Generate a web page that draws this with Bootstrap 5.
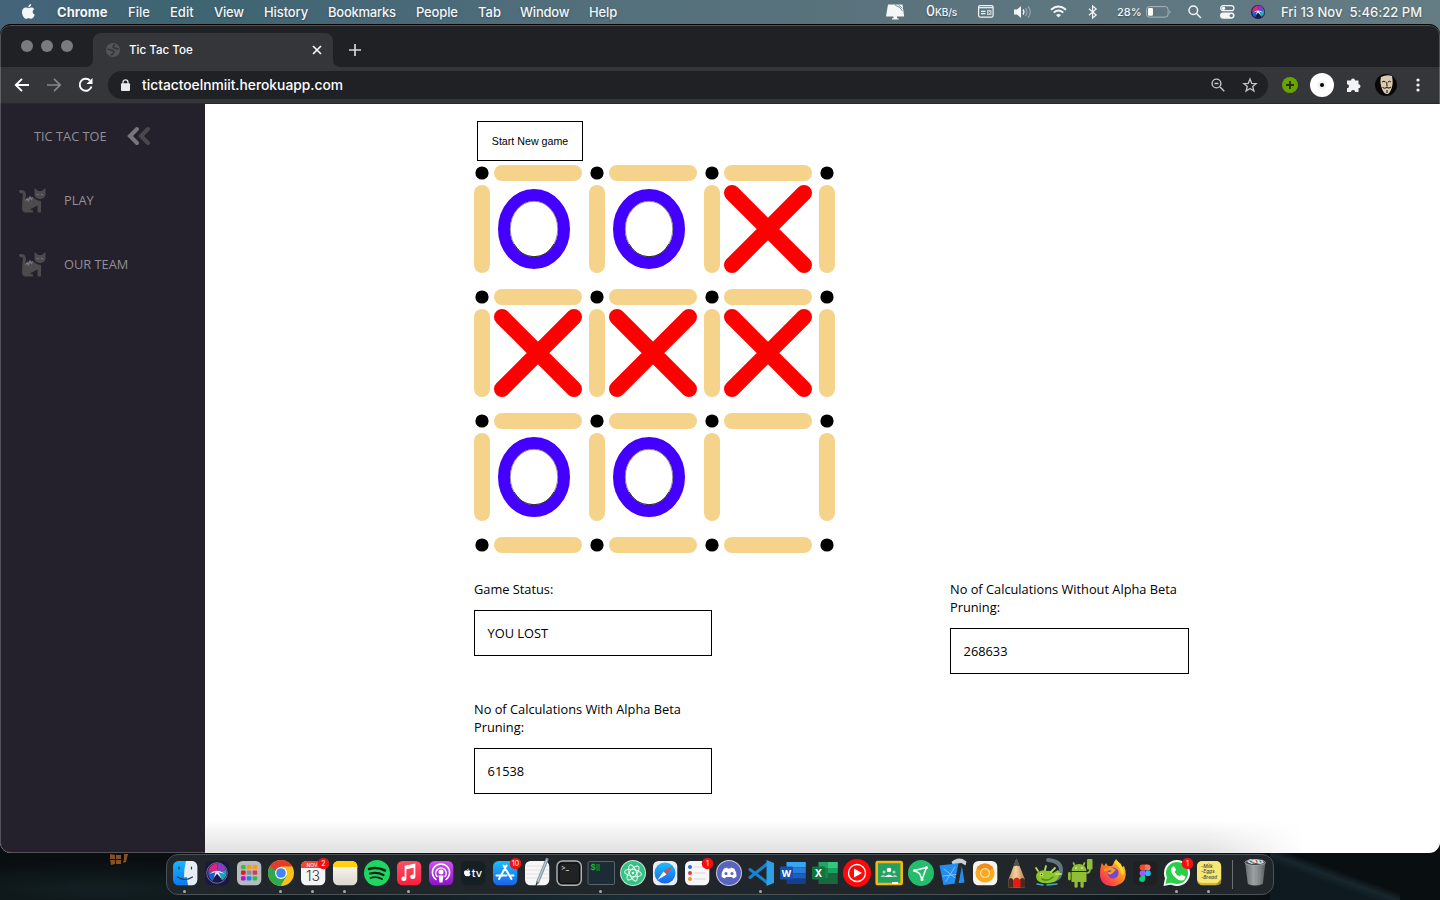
<!DOCTYPE html>
<html lang="en">
<head>
<meta charset="utf-8">
<meta name="viewport" content="width=device-width, initial-scale=1">
<title>Tic Tac Toe</title>
<link href="https://cdn.jsdelivr.net/npm/bootstrap@5.3.0/dist/css/bootstrap.min.css" rel="stylesheet">
<style>
  body { width:1440px; height:900px; overflow:hidden; font-family:Inter,"Liberation Sans",sans-serif; font-size:13px; line-height:18px;
    background:radial-gradient(ellipse 260px 30px at 100px 890px,#132023,transparent),linear-gradient(20deg,#0e1a20 40%,#18262d 49%,transparent 58%) 1270px 853px/130px 47px no-repeat,radial-gradient(ellipse 600px 40px at 700px 900px,#1c3039,transparent),#090e11; }
  svg { display:block; overflow:visible; }
  .desk-bar { height:24px; color:#f4f6f7; font-weight:500; text-shadow:0 1px 2px rgba(0,0,0,.35); padding:0 18px 0 22px; background:linear-gradient(90deg,#45647a 0,#3e6571 200px,#486878 380px,#55717c 640px,#5a737d 900px,#647c84 1440px); }
  .desk-menus { display:grid; grid-template-columns:35px 71px 42px 44px 50px 64px 88px 62px 42px 69px 30px; align-items:center; white-space:nowrap; }
  .desk-tray { display:grid; grid-template-columns:40px 52px 35px 37px 38px 29px 29px 42px 32px 31px 30px 141px; align-items:center; white-space:nowrap; padding-bottom:1px; }
  .win-back { background:linear-gradient(90deg,#45647a,#3e6571 200px,#55717c 640px,#647c84) top/100% 40px no-repeat; }
  .win { height:829px; border-radius:11px; border-top:1px solid #000; overflow:hidden; background:#202124; position:relative; }
  .win-edge { inset:0; border:1px solid rgba(255,255,255,.22); border-radius:10px; pointer-events:none; }
  .tab-strip { height:42px; padding:8px 0 0 21px; color:#fff; }
  .win-dot { width:12px; height:12px; border-radius:50%; background:#7b7b7d; }
  .tab-live { width:240px; height:34px; margin-left:20px; padding:0 11px 1px 13px; background:#35363a; border-radius:8px 8px 0 0; position:relative; font-size:11.600px; font-weight:500; }
  .tool-row { height:37px; background:#35363a; padding:0 14px; border-bottom:1px solid #28282c; color:#fff; }
  .omni { width:1160px; height:28px; border-radius:14px; background:#202124; margin-left:14px; padding:0 11px 0 13px; font-size:13.800px; font-weight:500; }
  .page { height:749px; background:#fff; color:#000; font-family:"Open Sans","Noto Sans",sans-serif; font-size:12.800px; position:relative; }
  .side { width:205px; background:#24212d; color:#919094; padding-top:23px; }
  .side a { color:inherit; text-decoration:none; height:18px; }
  .play-area { padding:17px 0 0 269px; }
  .new-game { width:106px; height:40px; margin:0 0 4px 3px; border:1px solid #000; border-radius:0; padding:0; font:10.667px "Liberation Sans",Arial,sans-serif; color:#000; }
  .board { display:grid; width:361px; grid-template-columns:20px 95px 20px 95px 20px 95px 16px; grid-template-rows:20px 104px 20px 104px 20px 104px 16px; }
  .stick-h { width:88px; height:16px; border-radius:8px; background:#f5d38b; }
  .stick-v { width:16px; height:88px; border-radius:8px; background:#f5d38b; }
  .stats { margin:27px 0 0 0; display:grid; grid-template-columns:238px 239px; column-gap:238px; row-gap:26px; }
  .stat-box { height:46px; border:1px solid #000; margin-top:12px; padding:0 12.600px; }
  .dock-shade { left:205px; right:0; bottom:0; height:32px; background:linear-gradient(rgba(0,0,0,0),rgba(0,0,0,.04) 30%,rgba(0,0,0,.12)); -webkit-mask-image:linear-gradient(90deg,#000 1000px,transparent 1100px); mask-image:linear-gradient(90deg,#000 1000px,transparent 1100px); pointer-events:none; }
  .desk-foot { height:47px; padding:1px 0 0 166px; position:relative; }
  .dock { width:1108px; height:41px; border:1px solid #4b5256; border-radius:12px; padding:0 1px 0 2px; background:#20262a; }
  .dock svg { flex:none; }
  .dock-rule { width:1px; height:29px; background:#687074; margin:5px 6px 0 7px; }
  .lamp { left:109px; top:0; }
</style>
</head>
<body>
<header class="desk-bar d-flex justify-content-between">
  <nav class="desk-menus">
    <svg width="13" height="16" viewBox="0 0 13 16" fill="#f4f6f7"><path d="M9.200 0c.1 1.600-1.200 3.200-2.800 3.200C6.200 1.700 7.600.2 9.200 0zM6.700 4.200c.7 0 1.500-.7 2.700-.7 1.200 0 2.300.6 2.900 1.600-2.400 1.500-2 4.700.5 5.700-.6 1.700-2 4-3.500 4-1 0-1.400-.6-2.600-.6s-1.600.6-2.600.6C2.400 14.800 0 11.300 0 8.200 0 5.200 1.900 3.600 3.900 3.600c1.200 0 2.100.6 2.800.6z"/></svg>
    <b style="letter-spacing:.05px">Chrome</b><span>File</span><span>Edit</span><span style="letter-spacing:-.2px">View</span><span style="letter-spacing:-.1px">History</span><span style="letter-spacing:-.25px">Bookmarks</span><span style="letter-spacing:-.15px">People</span><span>Tab</span><span style="letter-spacing:-.2px">Window</span><span style="letter-spacing:-.1px">Help</span>
  </nav>
  <div class="desk-tray">
    <svg width="19" height="16" viewBox="0 0 19 16" fill="#f4f6f7"><path d="M2 .5h14.500l1.700 12H0zM7.500 12.500h3.500v1.700h1.500v1.300H6v-1.300h1.500z"/><path d="M9 1q5 1.500 7.500 6M12.500 1l4 3.500" stroke="#5a737d" stroke-width=".8" fill="none"/></svg>
    <span style="letter-spacing:-.1px"><span style="font-size:14px">0</span><span style="font-size:10px">KB/s</span></span>
    <svg width="16" height="13" viewBox="0 0 16 13" fill="none" stroke="#f4f6f7"><rect x=".6" y=".6" width="14.500" height="11.500" rx="1.500" stroke-width="1.200"/><path d="M1 2.700h14" stroke-width="1.200"/><path d="M3 6.300h4.500M3 8.700h4.500" stroke-width="1.200"/><path d="M9 5h4.500v5H9z" fill="#c9d2d5" stroke="none"/><path d="M10 6.300l2.500 2.400M12.500 6.300L10 8.700" stroke="#5a737d" stroke-width=".8"/></svg>
    <svg width="19" height="14" viewBox="0 0 19 14" fill="none"><path d="M1 4.500h3L8 1v12L4 9.500H1z" fill="#f4f6f7"/><path d="M10 4.500q2 2.500 0 5" stroke="#f4f6f7" stroke-width="1.300"/><path d="M12.500 3q3 4 0 8M15 1.500q4.500 5.500 0 11" stroke="#9aabb1" stroke-width="1.200"/></svg>
    <svg width="17" height="13" viewBox="0 0 17 13" fill="none" stroke="#f4f6f7" stroke-width="1.900"><path d="M1 4.700Q8.500-1.700 16 4.700M3.700 7.600q4.800-4.200 9.600 0"/><path d="M6 10q2.500-2 5 0L8.500 12.600z" fill="#f4f6f7" stroke="none"/></svg>
    <svg width="10" height="14" viewBox="0 0 10 14" fill="none" stroke="#f4f6f7" stroke-width="1.200"><path d="M1 3.800l7.200 6.200-3.600 3V1l3.600 3L1 10.200"/></svg>
    <span style="font-size:11px">28%</span>
    <svg width="26" height="12" viewBox="0 0 26 12"><rect x=".6" y=".6" width="21.500" height="10.500" rx="2.800" fill="none" stroke="#aab8bc"/><rect x="2" y="2" width="5" height="7.700" rx="1.300" fill="#fff"/><path d="M23.500 4q2 1.900 0 4z" fill="#aab8bc"/></svg>
    <svg width="13" height="13" viewBox="0 0 13 13" fill="none" stroke="#f4f6f7" stroke-width="1.500"><circle cx="5.300" cy="5.300" r="4.300"/><path d="M8.500 8.500l4 4" stroke-linecap="round"/></svg>
    <svg width="15" height="14" viewBox="0 0 15 14"><rect x=".7" y=".7" width="13.200" height="5" rx="2.500" fill="none" stroke="#f4f6f7" stroke-width="1.200"/><circle cx="3.500" cy="3.200" r="1.700" fill="#fff"/><rect x="0" y="7.500" width="14.500" height="6.200" rx="3.100" fill="#f4f6f7"/><circle cx="11.300" cy="10.600" r="1.700" fill="#60777f"/></svg>
    <svg width="14" height="14" viewBox="0 0 28 28"><use href="#orb"/></svg>
    <span id="clock" style="letter-spacing:.03px">Fri 13 Nov&nbsp; 5:46:22 PM</span>
  </div>
</header>

<div class="win-back">
<div class="win">
  <div class="tab-strip d-flex">
    <div class="d-flex" style="gap:8px;padding-top:7px"><i class="win-dot"></i><i class="win-dot"></i><i class="win-dot"></i></div>
    <div class="tab-live d-flex align-items-center">
      <svg width="14" height="14" viewBox="0 0 14 14"><circle cx="7" cy="7" r="7" fill="#54555a"/><path d="M1.500 6.500c2-.8 3 .9 4.500.9S8.500 9 7.500 10 6.500 12 4.500 11.500M9 1.500C7 2 6.500 4.300 8 4.600s2 1.400 4.500 1.400" fill="none" stroke="#35363a" stroke-width="1.700"/></svg>
      <span class="flex-grow-1" style="margin-left:9px">Tic Tac Toe</span>
      <svg width="10" height="10" viewBox="0 0 10 10" stroke="#fff" stroke-width="1.600"><path d="M1 1l8 8M9 1L1 9"/></svg>
      <svg class="position-absolute" style="left:-8px;bottom:0" width="256" height="8" fill="#35363a"><path d="M8 0v8H0q8 0 8-8zM248 0v8h8q-8 0-8-8z"/></svg>
    </div>
    <svg width="12" height="12" viewBox="0 0 12 12" stroke="#d5d6d8" stroke-width="1.700" style="margin:11px 0 0 16px"><path d="M6 0v12M0 6h12"/></svg>
  </div>
  <div class="tool-row d-flex align-items-center">
    <svg width="16" height="14" viewBox="0 0 16 14" fill="none" stroke="#fff" stroke-width="1.900"><path d="M15 7H2M8 .8L1.800 7 8 13.200"/></svg>
    <svg width="16" height="14" viewBox="0 0 16 14" fill="none" stroke="#86878a" stroke-width="1.700" style="margin-left:16px"><path d="M1 7h13M8 .8L14.200 7 8 13.200"/></svg>
    <svg width="16" height="16" viewBox="0 0 16 16" fill="none" stroke="#fff" stroke-width="1.900" style="margin-left:16px"><path d="M13.500 9.500A6 6 0 1 1 12 3.500"/><path d="M14.500 1v6h-6z" fill="#fff" stroke="none"/></svg>
    <div class="omni d-flex align-items-center">
      <svg width="9" height="12" viewBox="0 0 9 12"><path d="M2 5V3.300a2.500 2.500 0 0 1 5 0V5" fill="none" stroke="#e8eaed" stroke-width="1.300"/><rect y="4.300" width="9" height="7.700" rx="1" fill="#e8eaed"/></svg>
      <span class="flex-grow-1" style="margin-left:12px"><span id="addr">tictactoelnmiit.herokuapp.com</span></span>
      <svg width="14" height="14" viewBox="0 0 14 14" fill="none" stroke="#c3c5c8" stroke-width="1.400"><circle cx="5.500" cy="5.500" r="4.400"/><path d="M9 9l4.300 4.300M3.500 5.500h4"/></svg>
      <svg width="14" height="14" viewBox="0 0 14 14" fill="none" stroke="#c3c5c8" stroke-width="1.300" style="margin-left:18px"><path d="M7 1l1.700 4.300 4.500.3-3.500 2.900 1.200 4.500L7 10.500 3.100 13l1.200-4.500L.8 5.600l4.500-.3z"/></svg>
    </div>
    <svg width="16" height="16" viewBox="0 0 16 16" style="margin-left:14px"><circle cx="8" cy="8" r="8" fill="#68a300"/><path d="M8 4v8M4 8h8" stroke="#223010" stroke-width="1.900"/></svg>
    <svg width="24" height="24" viewBox="0 0 24 24" style="margin-left:12px"><circle cx="12" cy="12" r="12" fill="#fff"/><circle cx="12" cy="12" r="4.500" fill="#f1f1f1"/><circle cx="12" cy="12" r="2" fill="#000"/></svg>
    <svg width="16" height="16" viewBox="0 0 16 16" fill="#f1f3f4" style="margin-left:12px"><path d="M1 3.500h4a2 2 0 1 1 4 0h3.500v3.700a2 2 0 1 1 0 4V15H9.200a2.100 2.100 0 0 0-4.200 0H1v-3.700a2 2 0 0 0 0-4z"/></svg>
    <svg width="22" height="22" viewBox="0 0 22 22" style="margin-left:13px"><circle cx="11" cy="11" r="11" fill="#090706"/><path d="M6 3q6-3 11-1 1.500 7-.5 12.500-2 5.500-4.500 5.500-3 0-5-5Q4.500 8 6 3z" fill="#dccbb0"/><path d="M7 8q2-1.500 3.500 0M13 8q1.500-1.500 3 0M11.800 8l.2 4.500M7.500 13.500q2 1.500 4.500 0 2 1.500 4-.5M12 16v3" stroke="#17100a" stroke-width="1" fill="none"/></svg>
    <svg width="4" height="14" viewBox="0 0 4 14" fill="#f1f3f4" style="margin-left:19px"><circle cx="2" cy="2" r="1.600"/><circle cx="2" cy="7" r="1.600"/><circle cx="2" cy="12" r="1.600"/></svg>
  </div>
  <div class="page d-flex">
    <aside class="side">
      <div class="d-flex align-items-center" style="padding-left:34px;height:18px"><span style="width:93px">TIC TAC TOE</span>
        <svg width="24" height="18" viewBox="0 0 24 18" fill="none" stroke-width="4" stroke-linecap="round"><path d="M21 2l-7 7 7 7" stroke="#49494b"/><path d="M10 2L3 9l7 7" stroke="#77777a"/></svg></div>
      <a href="#" class="d-flex align-items-center" style="margin:46px 0 46px 18px"><svg width="28" height="26" viewBox="0 -1 28 26" style="margin-right:18px"><use href="#cat"/></svg>PLAY</a>
      <a href="#" class="d-flex align-items-center" style="margin-left:18px"><svg width="28" height="26" viewBox="0 -1 28 26" style="margin-right:18px"><use href="#cat"/></svg>OUR TEAM</a>
    </aside>
    <main class="play-area">
      <button class="new-game btn d-block">Start New game</button>
      <div class="board" id="board"></div>
      <div class="stats">
        <div><div>Game Status:</div><div class="stat-box d-flex align-items-center">YOU LOST</div></div>
        <div><div>No of Calculations Without Alpha Beta Pruning:</div><div class="stat-box d-flex align-items-center">268633</div></div>
        <div><div>No of Calculations With Alpha Beta Pruning:</div><div class="stat-box d-flex align-items-center">61538</div></div>
      </div>
    </main>
    <div class="dock-shade position-absolute"></div>
  </div>
  <div class="win-edge position-absolute"></div>
</div>
</div>

<footer class="desk-foot">
  <svg class="lamp position-absolute" width="19" height="13" viewBox="0 0 19 13" fill="#a5622c"><path d="M1 1l5 1v4H1zM7 2h5v4H7zM1 7h5v4l-4 1zM7 7h5v4H7zM15 1h4l-2 8-3 1 1-4z" opacity=".8"/></svg>
  <div class="dock d-flex" id="dock"></div>
</footer>

<svg width="0" height="0" class="position-absolute">
  <defs>
    <linearGradient id="gBlue" x2="0" y2="1"><stop stop-color="#1bc0fb"/><stop offset="1" stop-color="#1a62e8"/></linearGradient>
    <linearGradient id="gFace" x2="0" y2="1"><stop stop-color="#18b6fd"/><stop offset="1" stop-color="#0b78f0"/></linearGradient>
    <linearGradient id="gRed" x2="0" y2="1"><stop stop-color="#fb5163"/><stop offset="1" stop-color="#fa1f3c"/></linearGradient>
    <linearGradient id="gPod" x2="0" y2="1"><stop stop-color="#d350f3"/><stop offset="1" stop-color="#8913c9"/></linearGradient>
    <linearGradient id="gFox" x1="1" x2="0" y2="1"><stop stop-color="#ffe226"/><stop offset=".5" stop-color="#ff7a24"/><stop offset="1" stop-color="#f5106c"/></linearGradient>
    <linearGradient id="gNote" x2="0" y2="1"><stop stop-color="#fffbee"/><stop offset="1" stop-color="#dcd8d2"/></linearGradient>
    <linearGradient id="gWood"><stop stop-color="#c9955c"/><stop offset=".45" stop-color="#f3d3a2"/><stop offset="1" stop-color="#b67c46"/></linearGradient>
    <linearGradient id="gBin"><stop stop-color="#666b6e"/><stop offset=".45" stop-color="#a0a5a7"/><stop offset="1" stop-color="#595e61"/></linearGradient>
    <g id="orb"><circle cx="14" cy="14" r="14" fill="#211747"/><path d="M14 14L2 12A13 13 0 0 1 15 1z" fill="#d9277f"/><path d="M14 14L15 1a13 13 0 0 1 11 9z" fill="#8a3cc9"/><path d="M14 14l12-4a13 13 0 0 1-5 14z" fill="#15a5b8"/><path d="M14 14L2 12q0 8 6 13z" fill="#205fc4"/><path d="M4 15q10-8 20 0l-8-2 4 8-6-6-4 5 2-7z" fill="#fff" opacity=".9"/></g>
    <g id="cat"><path d="M2.500 3.500C6.500 2.700 7 7 6 10" fill="none" stroke="#4b4b4d" stroke-width="3" stroke-linecap="round"/><path d="M4.500 10q1.500-2 3 2 3-4 7-3l3 2q2 2 5.500 2v11.500h-3.500v-7l-7.500 4 3 1v2H7q-3-.5-3-4zM16.500 0l4 3h3l4-3v6q0 4.500-5.500 5-5.500-.5-5.500-5z" fill="#4b4b4d"/><path d="M7.500 12.500l1.800-2 1 2.500 1.700-4 1.300 2.500 1.500-2M18.800 6.500h1.800M23 6.500h1.800" stroke="#77777c" stroke-width="1.200" fill="none"/></g>
  </defs>
</svg>

<script>
// Build the 3x3 board: pegs and sticks around each cell, marks inside.
const marks = ['OOX', 'XXX', 'OO '];
const peg = '<svg width="16" height="16"><circle cx="8" cy="8" r="6.600"/></svg>';
const cross = '<svg width="88" height="88" viewBox="0 0 88 88"><path d="M8 8l72 72M80 8L8 80" stroke="red" stroke-width="16" stroke-linecap="round"/></svg>';
const nought = '<svg width="88" height="88" viewBox="0 0 88 88" fill="none"><ellipse cx="40" cy="44" rx="30" ry="34" stroke="#40f" stroke-width="12"/><ellipse cx="40" cy="44" rx="23.700" ry="27.700" stroke="#777" stroke-width=".8"/><path d="M20 59Q27 71.500 40 71.700T60 59" stroke="#222" stroke-width=".9"/></svg>';
let cells = '';
for (let r = 0; r < 7; r++) for (let c = 0; c < 7; c++) {
  if (r % 2 === 0) cells += '<div>' + (c % 2 ? '<div class="stick-h"></div>' : peg) + '</div>';
  else if (c % 2 === 0) cells += '<div><div class="stick-v"></div></div>';
  else { const m = marks[(r - 1) / 2][(c - 1) / 2]; cells += '<div>' + (m === 'X' ? cross : m === 'O' ? nought : '') + '</div>'; }
}
document.getElementById('board').innerHTML = cells;

// Dock icons, each drawn in a 32x38 slot.
const tile = (fill, more = '') => `<rect x="4" y="6" width="24.300" height="24.300" rx="5.500" fill="${fill}" ${more}/>`;
const disc = (fill, r = 13) => `<circle cx="16" cy="18" r="${r}" fill="${fill}"/>`;
const word = (x, y, s, t, f, more = '') => `<text x="${x}" y="${y}" font-size="${s}" fill="${f}" text-anchor="middle" ${more}>${t}</text>`;
const badge = n => `<circle cx="26.500" cy="8.500" r="5.800" fill="#f70d10"/>` + word(26.500, 11, 7, n, '#fff');
const line = (d, c, w = 1) => `<path d="${d}" stroke="${c}" stroke-width="${w}" fill="none" stroke-linecap="round"/>`;
const fill = (d, c) => `<path d="${d}" fill="${c}"/>`;
const on = '<circle cx="15.500" cy="36.500" r="1.500" fill="#a6abae"/>';
const launch = ['#35c13b','#fb9a17','#fd9b16','#ee1132','#8b8d90','#ee2f53','#a916df','#1d83f0','#22c44c'].map((c, i) => `<rect x="${8 + i % 3 * 5.800}" y="${10 + (i / 3 | 0) * 5.600}" width="4.600" height="4.200" rx="1" fill="${c}"/>`).join('');
const slots = [
  tile('url(#gFace)') + fill('M17 6h6a5.500 5.500 0 0 1 5.300 5.500v13.300a5.500 5.500 0 0 1-5.500 5.500H19q-1-4-1-8h-3q0-9 2-16.300z', '#e8edf3') + line('M10 12v2M22.500 12v2M8.500 22q7.500 5 15 0', '#163b58', 1.200) + on,
  tile('#1c173f') + '<g transform="translate(5.500 7.500) scale(.75)"><use href="#orb"/></g><circle cx="16" cy="18" r="10.300" fill="none" stroke="#7c83a2" stroke-width=".8"/>',
  tile('#b9bcbe') + launch,
  disc('#fbc116') + fill('M4.700 11.500A13 13 0 0 0 15.500 31L21.500 21 16 18z', '#2da94f') + fill('M4.700 11.500A13 13 0 0 1 27.300 11.500H16L11 16z', '#e33b2e') + disc('#fff', 6) + disc('#4285f4', 4.800) + on,
  tile('#f5f5f5') + fill('M4 13V11.500A5.500 5.500 0 0 1 9.500 6h13.300a5.500 5.500 0 0 1 5.500 5.500V13z', '#ef4438') + word(15, 12, 5, 'NOV', '#fff') + word(16, 26, 14, '13', '#333', 'font-weight="300"') + badge(2) + on,
  tile('url(#gNote)') + fill('M4 12v-.5A5.500 5.500 0 0 1 9.500 6h13.300a5.500 5.500 0 0 1 5.500 5.500v.5z', '#ffd00b') + on,
  disc('#1ed760') + line('M8 14q8-2.500 16 1.500', '#152019', 2.600) + line('M9 18.500q7-2 13.500 1.500', '#152019', 2.200) + line('M9.500 23q6-2 11.500 1', '#152019', 1.800),
  tile('url(#gRed)') + '<path d="M12.500 23.500v-12l9-2v12" fill="none" stroke="#fff" stroke-width="1.700"/><path d="M12.500 12l9-2v2.500l-9 2z" fill="#fff"/><ellipse cx="10.800" cy="23.700" rx="2.600" ry="2.200" fill="#fff"/><ellipse cx="19.800" cy="21.700" rx="2.600" ry="2.200" fill="#fff"/>' + on,
  tile('url(#gPod)') + line('M11 24.500a8.600 8.600 0 1 1 10 0M12 21.500a5.200 5.200 0 1 1 8 0', '#fff', 1.500) + '<circle cx="16" cy="17" r="2.500" fill="#fff"/>' + fill('M13.500 20.500h5l-1 7h-3z', '#fff'),
  tile('#142023') + '<g transform="translate(7 13.500) scale(.52)" fill="#fff"><path d="M9.200 0c.1 1.600-1.200 3.200-2.800 3.200C6.200 1.700 7.600.2 9.200 0zM6.700 4.200c.7 0 1.500-.7 2.700-.7 1.200 0 2.300.6 2.900 1.600-2.400 1.500-2 4.700.5 5.700-.6 1.700-2 4-3.500 4-1 0-1.400-.6-2.600-.6s-1.600.6-2.600.6C2.400 14.800 0 11.300 0 8.200 0 5.200 1.900 3.600 3.900 3.600c1.200 0 2.100.6 2.800.6z"/></g>' + word(20, 21.500, 11, 'tv', '#fff', 'font-weight="500"'),
  tile('url(#gBlue)') + line('M17.500 10.500L10 24M14.500 10.500L22.500 24M7.500 20.500h10M22 20.500h2.500', '#fff', 2) + badge(10),
  tile('#f6f6f6') + line('M4.500 11h23M4.500 15h23M4.500 19h23M4.500 23h23', '#dededf', .8) + line('M26 4.500L16.500 27.500', '#78909e', 3.200) + line('M25.700 5L17 26', '#bccbd4', 1.300) + line('M16 28l-1 2.500', '#333', 1.200),
  tile('#23272a', 'stroke="#aeb3b6" stroke-width="1.400"') + '<rect x="6" y="8" width="20.500" height="20.500" rx="3.500" fill="#202223" stroke="#0c0d0e"/>' + word(12, 14.500, 7, '&gt;_', '#fff'),
  '<rect x="3" y="6.500" width="26.500" height="23" rx="1.500" fill="#1c2b35" stroke="#56646c"/>' + word(8, 14.500, 8, '$', '#1bbf2e', 'font-weight="600"') + fill('M11 9h4v7h-4z', '#146b29') + on,
  disc('#cbe8db') + disc('#35c385', 12) + '<g fill="none" stroke="#e2f5e9" stroke-width="1.100"><ellipse cx="16" cy="18" rx="3.500" ry="8.500" transform="rotate(-20 16 18)"/><ellipse cx="16" cy="18" rx="3.500" ry="8.500" transform="rotate(40 16 18)"/><ellipse cx="16" cy="18" rx="3.500" ry="8.500" transform="rotate(100 16 18)"/></g><circle cx="16" cy="18" r="1.300" fill="#fff"/>',
  tile('#ececee') + disc('url(#gBlue)', 10.500) + fill('M23.500 11l-6 8.500-3-3z', '#f0413c') + fill('M8.500 25l6-8.500 3 3z', '#fff'),
  tile('#f7f7f8') + '<circle cx="9" cy="12" r="2" fill="#1674e5"/><circle cx="9" cy="18" r="2" fill="#ed3a30"/><circle cx="9" cy="24" r="2" fill="#f49a20"/>' + line('M13.500 12h11M13.500 18h11M13.500 24h11', '#cfcfd2', .8) + badge(1),
  disc('#c9cbe4') + disc('#5865bd', 12) + fill('M10.500 14q2-1.300 3.500-1.500l.6 1h2.800l.6-1q1.500.2 3.500 1.500 2.200 3.500 2 7.500-1.500 1.500-3.500 2l-1-1.500h-6l-1 1.500q-2-.5-3.500-2-.2-4 2-7.500z', '#fff') + '<circle cx="13" cy="18.600" r="1.500" fill="#5865bd"/><circle cx="19" cy="18.600" r="1.500" fill="#5865bd"/>',
  line('M5 14.500L22 27.500M5 22.500L22 9', '#1684cf', 3) + fill('M21.500 5l7.500 3v20L21.500 31z', '#2c9fe7') + on,
  fill('M9.500 7h19.300v5.500H9.500z', '#36a7f2') + fill('M9.500 12.500h19.300v5.700H9.500z', '#2b7cd7') + fill('M9.500 18.200h19.300v5.500H9.500z', '#1f5dbe') + fill('M9.500 23.700h19.300V29H9.500z', '#123f8f') + '<rect x="3" y="11.500" width="13" height="13" rx="1" fill="#194fae"/>' + word(9.500, 21.500, 9.500, 'W', '#fff', 'font-weight="700"'),
  fill('M9.500 7h10v6h-10z', '#24a366') + fill('M19 7h9.800v6H19z', '#36c481') + fill('M9.500 13h10v10h-10z', '#17834b') + fill('M19 13h9.800v5H19z', '#17a45e') + fill('M19 18h9.800v11H9.500v-6H19z', '#19683e') + '<rect x="3" y="11.500" width="13" height="13" rx="1" fill="#107440"/>' + word(9.500, 21.500, 10, 'X', '#fff', 'font-weight="700"'),
  disc('#fe0809', 14) + '<circle cx="16" cy="18" r="8.500" fill="none" stroke="#fff" stroke-width="1.300"/>' + fill('M13 13.500l8 4.500-8 4.500z', '#fff'),
  '<rect x="3.700" y="7" width="25" height="22" rx="1" fill="#24a062" stroke="#f4b910" stroke-width="2.600"/><circle cx="16" cy="15" r="2.300" fill="#fff"/><circle cx="11" cy="17" r="1.500" fill="#a9ddc0"/><circle cx="21" cy="17" r="1.500" fill="#a9ddc0"/>' + fill('M11.500 22q4.500-5 9 0z', '#fff') + fill('M7.500 22q3-4 5 0zM19.500 22q2-4 5 0z', '#a9ddc0') + fill('M19 27h6v2h-6z', '#fff'),
  disc('#24bd6b') + '<path d="M9.500 15.500L21.500 12.500 17 24.500 14.500 18.500z" fill="none" stroke="#fff" stroke-width="1.500" stroke-linejoin="round"/><circle cx="9.500" cy="15.500" r="1.500" fill="#fff"/><circle cx="21.500" cy="12.500" r="1.500" fill="#fff"/><circle cx="17" cy="24.500" r="1.500" fill="#fff"/>',
  fill('M2.500 10.500l22-2.500 3 19.500-21 2.500z', '#238df0') + line('M7 14l15 12M9 26L18 12M6 21l17-2', '#85c6fa', .9) + line('M23.500 8l-4 21', '#252c31', 4) + fill('M14.500 7q5-5 11-3l4 2.500-1 4-4-2.500-9 1z', '#c9d0d4'),
  tile('#f5f4f1') + disc('#f9ab1c', 9.600) + fill('M16 18L7.700 13.200A9.600 9.600 0 0 1 24.300 13.200z', '#f58b17') + disc('#ffe6a5', 5) + disc('#f7a72a', 3.800),
  fill('M15.500 3.500l8.500 21v8H7.500v-8z', 'url(#gWood)') + fill('M15.500 3l3.300 8.500q-3.500-1.500-6.500 0z', '#56504c') + fill('M7.500 24.500q2.500-3 4.500 0l1 8H7.500zM19 24.500q2-3 5 0v8h-5z', '#4a2b23') + fill('M12 32.500v-7q3.500-6 7.500 0v7z', '#e31c16'),
  line('M15 5q13 1 13 10 0 8-7 10', '#62767d', 4) + fill('M5 17q5-3 9-1 3-1 6 2l5-3q3 2 1 6-2 6-9 7-8 1-12-2-4-5 0-9z', '#8cc62c') + line('M5 16l-2-3M12 15l1-4M18 17l4-4M23 19l5 0', '#b6df4d', 1.800) + line('M9 24q6 3 11-2', '#4f8f1c', 1.500) + line('M4 29l6 1M14 30l10-1', '#4aaac5', 1.500) + '<circle cx="8.500" cy="19.500" r="1.700" fill="#ece25a"/><circle cx="8.500" cy="19.500" r=".8" fill="#222"/>',
  '<g fill="#91bd37"><path d="M6.500 16a7.500 7 0 0 1 15 0zM6.500 17h15v10h-15z"/><rect x="3" y="17" width="2.800" height="8.500" rx="1.400"/><rect x="9.500" y="26" width="3.200" height="6.700" rx="1.500"/><rect x="15.500" y="26" width="3.200" height="6.700" rx="1.500"/><rect x="22" y="4" width="5.500" height="10.500" rx="1"/></g>' + line('M22 18q3 0 3-4M9.500 10L8.500 8M18.500 10l1-2', '#91bd37', 1.700) + '<circle cx="11" cy="13" r=".8" fill="#fff"/><circle cx="17" cy="13" r=".8" fill="#fff"/>',
  fill('M5 8l2 3 2-3 2 3 4 0 4-7q3 4 5 5l1 3 2-1q4 10-1 16-6 5-12 4Q3 30 3 19q0-7 2-11z', 'url(#gFox)') + disc('#7146d8', 5.500) + line('M8 15q5-2 9 0-3 4-5 3', '#ff9a22', 2.500) + line('M19 7q5 4 6.500 11', '#ffda2c', 3),
  tile('#202021') + '<g transform="translate(-1 -.500)"><path d="M17 10h-2.500a2.900 2.900 0 0 0 0 5.800H17z" fill="#f24e1e"/><path d="M17 10h2.700a2.900 2.900 0 0 1 0 5.800H17z" fill="#ff7262"/><path d="M17 15.800h-2.500a2.900 2.900 0 0 0 0 5.800H17z" fill="#a259ff"/><circle cx="19.900" cy="18.700" r="2.900" fill="#1abcfe"/><path d="M17 21.600h-2.500a2.900 2.900 0 1 0 2.500 2.900z" fill="#0acf83"/></g>',
  disc('#fff') + fill('M4 23l-1.500 8 8-1.500z', '#fff') + disc('#2bce4b', 11) + fill('M6 22l-1.500 7 7-1.800z', '#2bce4b') + fill('M12 11.500q1.500-.5 2 1l1 2.500-1.400 2q2 3.500 5 4.500l1.700-2 4 2q0 4-4 4-3 0-6.500-3.500Q10 18.500 10 15q0-2.500 2-3.500z', '#fff') + badge(1) + on,
  tile('#d5b735') + '<rect x="4" y="6" width="24" height="22" rx="5" fill="#f8e675"/>' + fill('M23 30l5-6v4q-1 2-5 2z', '#a99024') + ['-Milk','-Eggs','-Bread'].map((t, i) => `<text x="8" y="${12.500 + i * 5.500}" font-size="4.800" font-style="italic" font-weight="500" fill="#3a4a43">${t}</text>`).join('') + on
];
const bin = fill('M6 7h20.500l-2.700 22q-8 3-15 0z', 'url(#gBin)') + '<ellipse cx="16.200" cy="7.500" rx="10.300" ry="3" fill="#41474a" stroke="#aab0b2" stroke-width=".8"/>' + fill('M8 7l3-3 3 1 3-1 2 1 4 0 2 3-4 1-4-1-4 1z', '#dfe4e6') + line('M11 6l2 1M21 6l1 1', '#31899e', 1.500) + line('M17 5l1 2M14 8h1', '#c24b38', 1.300) + line('M10 12l1.500 16M16 12v17M22 12l-1.500 16', '#858a8c', .7);
const slot = s => `<svg width="32" height="38" viewBox="0 0 32 38">${s}</svg>`;
document.getElementById('dock').innerHTML = slots.map(slot).join('') + '<div class="dock-rule"></div>' + slot(bin);
</script>
<script src="https://cdn.jsdelivr.net/npm/bootstrap@5.3.0/dist/js/bootstrap.bundle.min.js"></script>
</body>
</html>
